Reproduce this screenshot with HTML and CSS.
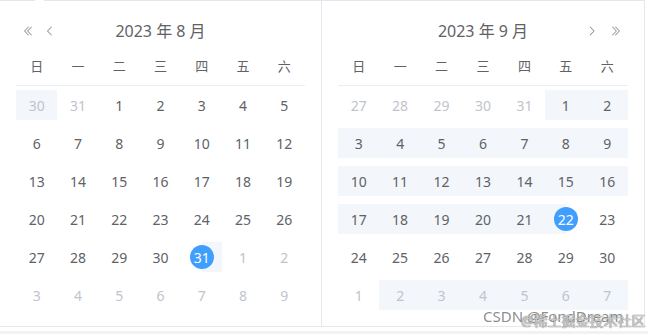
FILE: index.html
```html
<!DOCTYPE html>
<html lang="zh-CN">
<head>
    <meta charset="UTF-8">
    <title>日期范围选择</title>
    <link rel="stylesheet" href="styles.css">
</head>
<body>
    <div class="page">
        <div class="picker">
            <span class="notch"></span>

            <!-- left month -->
            <div class="panel panel-left">
                <div class="panel-header">
                    <div class="arrows">
                        <button class="arrow" type="button">
                            <svg viewBox="0 0 1024 1024"><path d="M529.408 149.376a29.12 29.12 0 0 1 41.728 0 30.592 30.592 0 0 1 0 42.688L259.264 511.936l311.872 319.936a30.592 30.592 0 0 1-.512 43.264 29.12 29.12 0 0 1-41.216-.512L197.76 534.272a32 32 0 0 1 0-44.672l331.648-340.224zm256 0a29.12 29.12 0 0 1 41.728 0 30.592 30.592 0 0 1 0 42.688L515.264 511.936l311.872 319.936a30.592 30.592 0 0 1-.512 43.264 29.12 29.12 0 0 1-41.216-.512L453.76 534.272a32 32 0 0 1 0-44.672l331.648-340.224z"/></svg>
                        </button>
                        <button class="arrow" type="button">
                            <svg viewBox="0 0 1024 1024"><path d="M609.408 149.376 277.76 489.6a32 32 0 0 0 0 44.672l331.648 340.352a29.12 29.12 0 0 0 41.728 0 30.592 30.592 0 0 0 0-42.752L339.264 511.936l311.872-319.872a30.592 30.592 0 0 0 0-42.688 29.12 29.12 0 0 0-41.728 0z"/></svg>
                        </button>
                    </div>
                    <div class="title">2023 年 8 月</div>
                    <div></div>
                </div>
                <div class="week">
                    <span>日</span><span>一</span><span>二</span><span>三</span><span>四</span><span>五</span><span>六</span>
                </div>
                <div class="days">
                    <div class="day grey range">30</div><div class="day grey">31</div><div class="day">1</div><div class="day">2</div><div class="day">3</div><div class="day">4</div><div class="day">5</div>
                    <div class="day">6</div><div class="day">7</div><div class="day">8</div><div class="day">9</div><div class="day">10</div><div class="day">11</div><div class="day">12</div>
                    <div class="day">13</div><div class="day">14</div><div class="day">15</div><div class="day">16</div><div class="day">17</div><div class="day">18</div><div class="day">19</div>
                    <div class="day">20</div><div class="day">21</div><div class="day">22</div><div class="day">23</div><div class="day">24</div><div class="day">25</div><div class="day">26</div>
                    <div class="day">27</div><div class="day">28</div><div class="day">29</div><div class="day">30</div><div class="day start"><span class="dot">31</span></div><div class="day grey">1</div><div class="day grey">2</div>
                    <div class="day grey">3</div><div class="day grey">4</div><div class="day grey">5</div><div class="day grey">6</div><div class="day grey">7</div><div class="day grey">8</div><div class="day grey">9</div>
                </div>
            </div>

            <!-- right month -->
            <div class="panel panel-right">
                <div class="panel-header">
                    <div></div>
                    <div class="title">2023 年 9 月</div>
                    <div class="arrows arrows-right">
                        <button class="arrow" type="button">
                            <svg viewBox="0 0 1024 1024"><path d="M340.864 149.312a30.592 30.592 0 0 0 0 42.752L652.736 512 340.864 831.872a30.592 30.592 0 0 0 0 42.752 29.12 29.12 0 0 0 41.728 0L714.24 534.336a32 32 0 0 0 0-44.672L382.592 149.376a29.12 29.12 0 0 0-41.728-.064z"/></svg>
                        </button>
                        <button class="arrow" type="button">
                            <svg viewBox="0 0 1024 1024"><path d="M452.864 149.312a29.12 29.12 0 0 1 41.728.064L826.24 489.664a32 32 0 0 1 0 44.672L494.592 874.624a29.12 29.12 0 0 1-41.728 0 30.592 30.592 0 0 1 0-42.752L764.736 512 452.864 192a30.592 30.592 0 0 1 0-42.688zm-256 0a29.12 29.12 0 0 1 41.728.064L570.240 489.664a32 32 0 0 1 0 44.672L238.592 874.624a29.12 29.12 0 0 1-41.728 0 30.592 30.592 0 0 1 0-42.752L508.736 512 196.864 192a30.592 30.592 0 0 1 0-42.688z"/></svg>
                        </button>
                    </div>
                </div>
                <div class="week">
                    <span>日</span><span>一</span><span>二</span><span>三</span><span>四</span><span>五</span><span>六</span>
                </div>
                <div class="days">
                    <div class="day grey">27</div><div class="day grey">28</div><div class="day grey">29</div><div class="day grey">30</div><div class="day grey">31</div><div class="day range">1</div><div class="day range">2</div>
                    <div class="day range">3</div><div class="day range">4</div><div class="day range">5</div><div class="day range">6</div><div class="day range">7</div><div class="day range">8</div><div class="day range">9</div>
                    <div class="day range">10</div><div class="day range">11</div><div class="day range">12</div><div class="day range">13</div><div class="day range">14</div><div class="day range">15</div><div class="day range">16</div>
                    <div class="day range">17</div><div class="day range">18</div><div class="day range">19</div><div class="day range">20</div><div class="day range">21</div><div class="day end"><span class="dot">22</span></div><div class="day">23</div>
                    <div class="day">24</div><div class="day">25</div><div class="day">26</div><div class="day">27</div><div class="day">28</div><div class="day">29</div><div class="day">30</div>
                    <div class="day grey">1</div><div class="day grey range">2</div><div class="day grey range">3</div><div class="day grey range">4</div><div class="day grey range">5</div><div class="day grey range">6</div><div class="day grey range">7</div>
                </div>
            </div>
        </div>

        <div class="watermark">
            <span class="wm-csdn">CSDN @FondDream</span>
            <span class="wm-juejin">@稀土掘金技术社区</span>
        </div>
    </div>
</body>
</html>
```

FILE: styles.css
```css
/* Reset */
* {
    margin: 0;
    padding: 0;
    box-sizing: border-box;
}

body {
    font-family: "Noto Sans", "Noto Sans CJK SC", sans-serif;
    color: #606266;
    background: #fff;
}

.page {
    position: relative;
    width: 648px;
    height: 334px;
    background: linear-gradient(#fff 331px, #f2f2f2 331px);
}

/* Picker box */
.picker {
    position: relative;
    display: flex;
    width: 645px;
    background: #fff;
    border: 1px solid #e4e7ed;
    border-left: 0;
}

.notch {
    position: absolute;
    left: 35px;
    top: -1px;
    width: 9px;
    height: 1px;
    background: #fff;
}

.panel {
    width: 322px;
    padding: 16px;
}

.panel-left {
    border-right: 1px solid #e4e7ed;
}

/* Header */
.panel-header {
    display: grid;
    grid-template-columns: 1fr auto 1fr;
    align-items: center;
    height: 28px;
}

.title {
    font-size: 16px;
    line-height: 28px;
    color: #606266;
}

.arrows {
    display: flex;
    gap: 10px;
    padding-left: 6px;
}

.arrows-right {
    justify-content: flex-end;
    gap: 12px;
    padding-left: 0;
    padding-right: 6px;
}

.arrow {
    display: flex;
    border: 0;
    background: none;
    color: #77797f;
    cursor: pointer;
}

.arrow svg {
    width: 12px;
    height: 12px;
    fill: currentColor;
}

/* Week names */
.week {
    display: grid;
    grid-template-columns: repeat(7, 1fr);
    align-items: center;
    height: 41px;
    border-bottom: 1px solid #ebeef5;
    text-align: center;
    font-size: 13px;
}

/* Day cells */
.days {
    display: grid;
    grid-template-columns: repeat(7, 1fr);
    row-gap: 8px;
    padding-top: 4px;
    font-size: 14px;
}

.day {
    height: 30px;
    display: flex;
    align-items: center;
    justify-content: center;
}

.day.grey {
    color: #c0c4cc;
}

.day.range {
    background: #f3f6fb;
}

.day.start {
    background: linear-gradient(90deg, transparent 50%, #f3f6fb 50%);
}

.day.end {
    background: linear-gradient(90deg, #f3f6fb 50%, transparent 50%);
}

.dot {
    width: 24px;
    height: 24px;
    border-radius: 50%;
    background: #409eff;
    color: #fff;
    display: flex;
    align-items: center;
    justify-content: center;
}

/* Image watermark */
.watermark {
    position: absolute;
    left: 483px;
    top: 306px;
    width: 165px;
    height: 26px;
    font-size: 15px;
    white-space: nowrap;
}

.wm-csdn {
    position: absolute;
    left: 0;
    top: 0;
    color: rgba(120, 120, 120, 0.85);
}

.wm-juejin {
    position: absolute;
    left: 38px;
    top: 4px;
    font-size: 14px;
    color: rgba(255, 255, 255, 0.6);
    text-shadow: 0 0 1px #777, 0 0 1px #777;
}
```
